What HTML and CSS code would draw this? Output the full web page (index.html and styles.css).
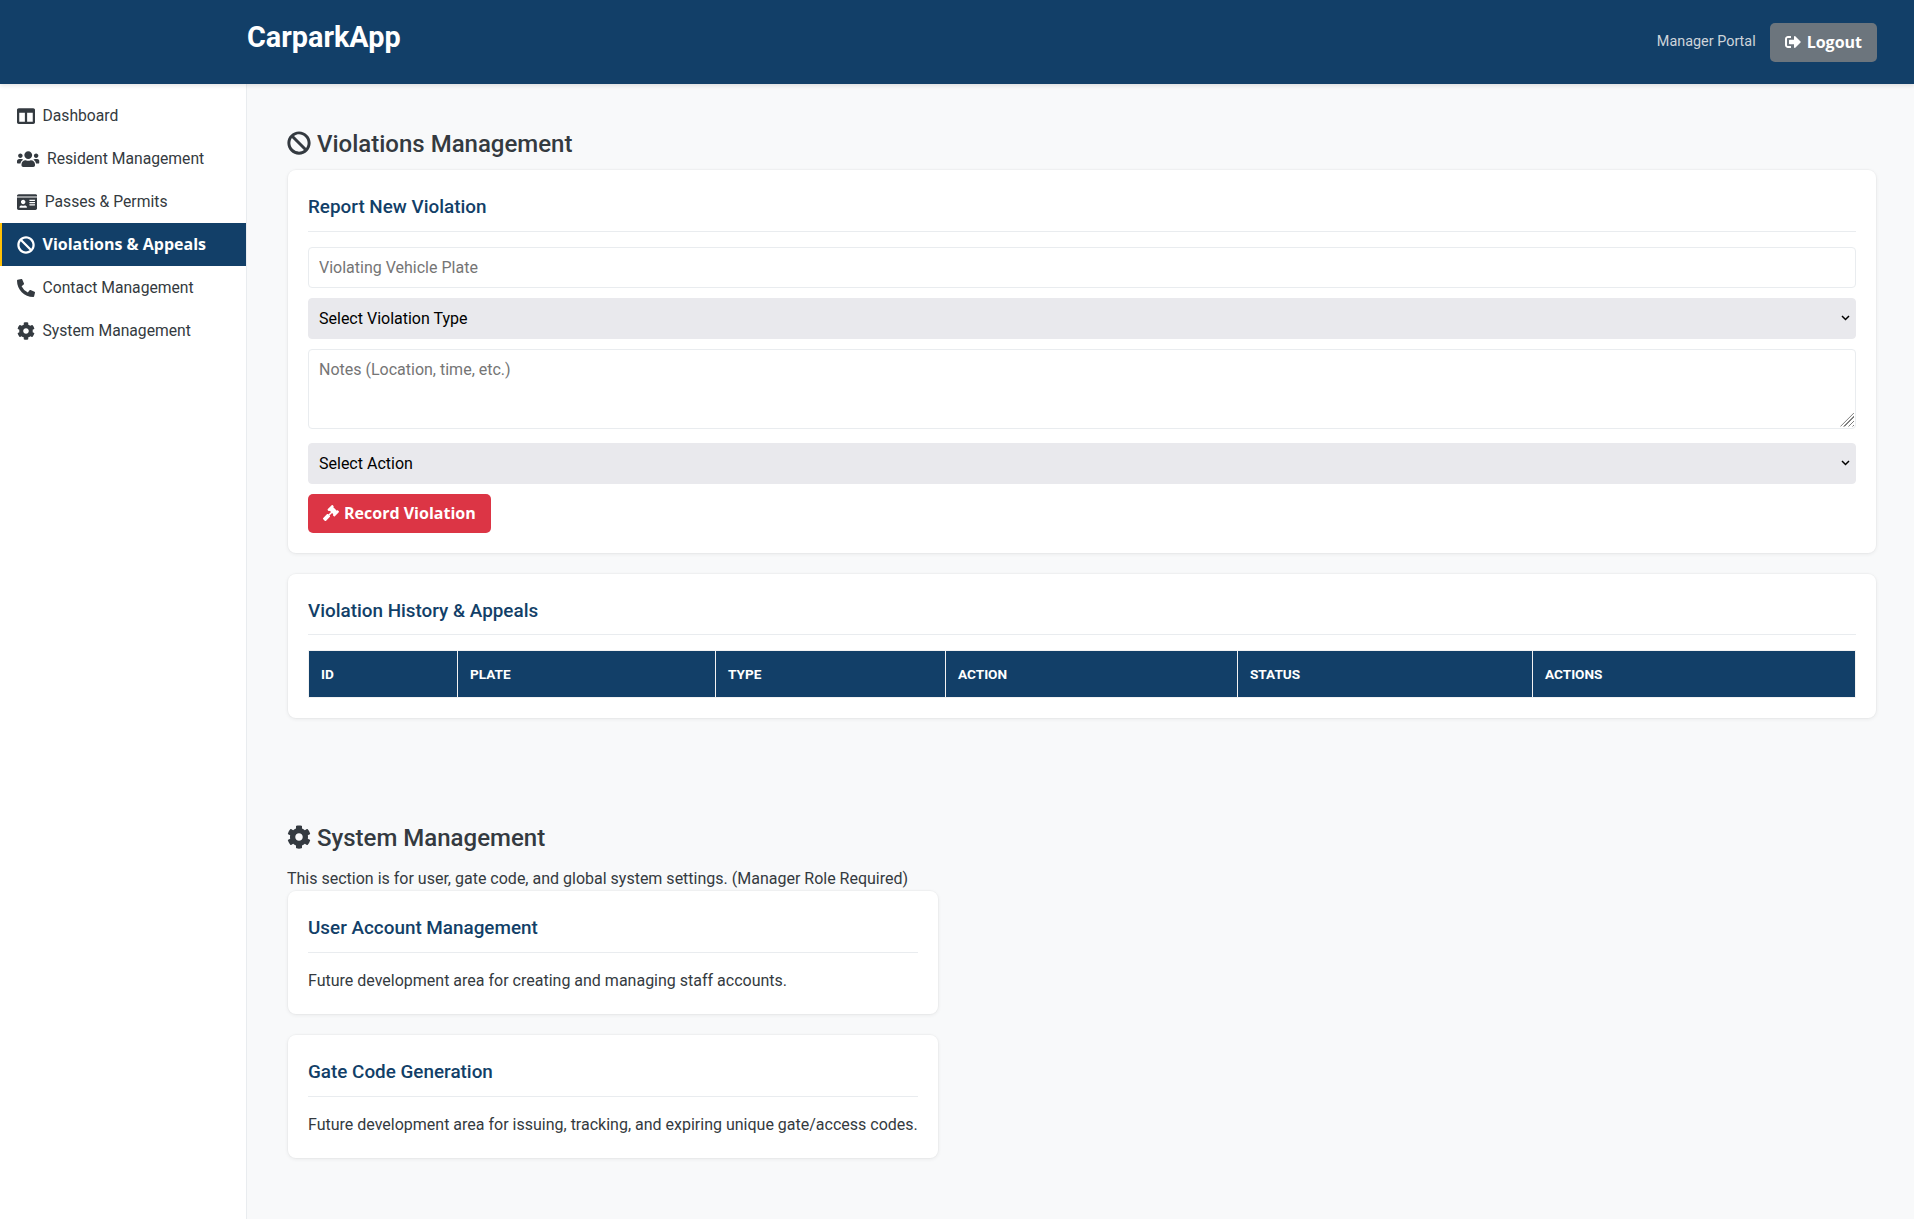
FILE: index.html
```html
<!DOCTYPE html>
<html lang="en">
<head>
  <meta charset="UTF-8">
  <title>CarparkApp - Manager Portal</title>
  <meta name="viewport" content="width=device-width, initial-scale=1.0">
  <link rel="stylesheet" href="styles.css">
</head>
<body>

  <svg class="icon-defs" aria-hidden="true">
    <symbol id="i-columns" viewBox="0 0 512 512"><path d="M464 32H48C21.49 32 0 53.49 0 80v352c0 26.51 21.49 48 48 48h416c26.51 0 48-21.49 48-48V80c0-26.51-21.49-48-48-48zM224 416H64V160h160v256zm224 0H288V160h160v256z"/></symbol>
    <symbol id="i-users" viewBox="0 0 640 512"><path d="M96 224c35.3 0 64-28.7 64-64s-28.7-64-64-64-64 28.7-64 64 28.7 64 64 64zm448 0c35.3 0 64-28.7 64-64s-28.7-64-64-64-64 28.7-64 64 28.7 64 64 64zm32 32h-64c-17.6 0-33.5 7.1-45.1 18.6 40.3 22.1 68.9 62 75.1 109.4h66c17.7 0 32-14.3 32-32v-32c0-35.3-28.7-64-64-64zm-256 0c61.9 0 112-50.1 112-112S381.9 32 320 32 208 82.1 208 144s50.1 112 112 112zm76.8 32h-8.3c-20.8 10-43.9 16-68.5 16s-47.6-6-68.5-16h-8.3C179.6 288 128 339.6 128 403.2V432c0 26.5 21.5 48 48 48h288c26.5 0 48-21.5 48-48v-28.8c0-63.6-51.6-115.2-115.2-115.2zm-223.7-13.4C161.5 263.1 145.6 256 128 256H64c-35.3 0-64 28.7-64 64v32c0 17.7 14.3 32 32 32h65.9c6.3-47.4 34.9-87.3 75.2-109.4z"/></symbol>
    <symbol id="i-idcard" viewBox="0 0 576 512"><path d="M528 32H48C21.5 32 0 53.5 0 80v16h576V80c0-26.5-21.5-48-48-48zM0 432c0 26.5 21.5 48 48 48h480c26.5 0 48-21.5 48-48V128H0v304zm352-232c0-4.4 3.6-8 8-8h144c4.4 0 8 3.6 8 8v16c0 4.4-3.6 8-8 8H360c-4.4 0-8-3.6-8-8v-16zm0 64c0-4.4 3.6-8 8-8h144c4.4 0 8 3.6 8 8v16c0 4.4-3.6 8-8 8H360c-4.4 0-8-3.6-8-8v-16zm0 64c0-4.4 3.6-8 8-8h144c4.4 0 8 3.6 8 8v16c0 4.4-3.6 8-8 8H360c-4.4 0-8-3.6-8-8v-16zM176 192c35.3 0 64 28.7 64 64s-28.7 64-64 64-64-28.7-64-64 28.7-64 64-64zM67.1 396.2C75.5 370.5 99.6 352 128 352h8.2c12.3 5.1 25.7 8 39.8 8s27.6-2.9 39.8-8h8.2c28.4 0 52.5 18.5 60.9 44.2 3.2 9.9-5.2 19.8-15.6 19.8H82.7c-10.4 0-18.8-10-15.6-19.8z"/></symbol>
    <symbol id="i-ban" viewBox="0 0 512 512"><path d="M256 8C119.034 8 8 119.033 8 256s111.034 248 248 248 248-111.034 248-248S392.967 8 256 8zm130.108 117.892c65.448 65.448 70 165.481 20.677 235.637L150.47 105.216c70.204-49.356 170.226-44.735 235.638 20.676zM125.892 386.108c-65.448-65.448-70-165.481-20.677-235.637L361.53 406.784c-70.203 49.356-170.226 44.736-235.638-20.676z"/></symbol>
    <symbol id="i-phone" viewBox="0 0 512 512"><path d="M497.39 361.8l-112-48a24 24 0 0 0-28 6.9l-49.6 60.6A370.66 370.66 0 0 1 130.6 204.11l60.6-49.6a23.94 23.94 0 0 0 6.9-28l-48-112A24.16 24.16 0 0 0 122.6.61l-104 24A24 24 0 0 0 0 48c0 256.5 207.9 464 464 464a24 24 0 0 0 23.4-18.6l24-104a24.29 24.29 0 0 0-14.01-27.6z"/></symbol>
    <symbol id="i-cog" viewBox="0 0 512 512"><path d="M487.4 315.7l-42.6-24.6c4.3-23.2 4.3-47 0-70.2l42.6-24.6c4.9-2.8 7.1-8.6 5.5-14-11.1-35.6-30-67.8-54.7-94.6-3.8-4.1-10-5.1-14.8-2.3L380.8 110c-17.9-15.4-38.5-27.3-60.8-35.1V25.8c0-5.6-3.9-10.5-9.4-11.7-36.7-8.2-74.3-7.8-109.2 0-5.5 1.2-9.4 6.1-9.4 11.7V75c-22.2 7.9-42.8 19.8-60.8 35.1L88.7 85.5c-4.9-2.8-11-1.9-14.8 2.3-24.7 26.7-43.6 58.9-54.7 94.6-1.7 5.4.6 11.2 5.5 14L67.3 221c-4.3 23.2-4.3 47 0 70.2l-42.6 24.6c-4.9 2.8-7.1 8.6-5.5 14 11.1 35.6 30 67.8 54.7 94.6 3.8 4.1 10 5.1 14.8 2.3l42.6-24.6c17.9 15.4 38.5 27.3 60.8 35.1v49.2c0 5.6 3.9 10.5 9.4 11.7 36.7 8.2 74.3 7.8 109.2 0 5.5-1.2 9.4-6.1 9.4-11.7v-49.2c22.2-7.9 42.8-19.8 60.8-35.1l42.6 24.6c4.9 2.8 11 1.9 14.8-2.3 24.7-26.7 43.6-58.9 54.7-94.6 1.5-5.5-.7-11.3-5.6-14.1zM256 336c-44.1 0-80-35.9-80-80s35.9-80 80-80 80 35.9 80 80-35.9 80-80 80z"/></symbol>
    <symbol id="i-logout" viewBox="0 0 512 512"><path d="M497 273L329 441c-15 15-41 4.5-41-17v-96H152c-13.3 0-24-10.7-24-24v-96c0-13.3 10.7-24 24-24h136V88c0-21.4 25.9-32 41-17l168 168c9.3 9.4 9.3 24.6 0 34zM192 436v-40c0-6.6-5.4-12-12-12H96c-17.7 0-32-14.3-32-32V160c0-17.7 14.3-32 32-32h84c6.6 0 12-5.4 12-12V76c0-6.6-5.4-12-12-12H96c-53 0-96 43-96 96v192c0 53 43 96 96 96h84c6.6 0 12-5.4 12-12z"/></symbol>
    <symbol id="i-gavel" viewBox="0 0 512 512"><path d="M504.971 199.362l-22.627-22.627c-9.373-9.373-24.569-9.373-33.941 0l-5.657 5.657L329.608 69.255l5.657-5.657c9.373-9.373 9.373-24.569 0-33.941L312.638 7.029c-9.373-9.373-24.569-9.373-33.941 0L154.246 131.48c-9.373 9.373-9.373 24.569 0 33.941l22.627 22.627c9.373 9.373 24.569 9.373 33.941 0l5.657-5.657 39.598 39.598-81.04 81.04-5.657-5.657c-12.497-12.497-32.758-12.497-45.255 0L9.373 412.118c-12.497 12.497-12.497 32.758 0 45.255l45.255 45.255c12.497 12.497 32.758 12.497 45.255 0l114.745-114.745c12.497-12.497 12.497-32.758 0-45.255l-5.657-5.657 81.04-81.04 39.598 39.598-5.657 5.657c-9.373 9.373-9.373 24.569 0 33.941l22.627 22.627c9.373 9.373 24.569 9.373 33.941 0l124.451-124.451c9.372-9.372 9.372-24.568 0-33.941z"/></symbol>
  </svg>

  <header class="topbar">
    <h1 class="brand">CarparkApp</h1>
    <div class="topbar-right">
      <span class="portal-label">Manager Portal</span>
      <button class="btn btn-grey"><svg class="icon"><use href="#i-logout"/></svg>Logout</button>
    </div>
  </header>

  <div class="layout">
    <!-- Sidebar -->
    <nav class="sidebar">
      <a class="nav-link" href="#"><svg class="icon"><use href="#i-columns"/></svg>Dashboard</a>
      <a class="nav-link" href="#"><svg class="icon icon-wide"><use href="#i-users"/></svg>Resident Management</a>
      <a class="nav-link" href="#"><svg class="icon icon-card"><use href="#i-idcard"/></svg>Passes &amp; Permits</a>
      <a class="nav-link active" href="#"><svg class="icon"><use href="#i-ban"/></svg>Violations &amp; Appeals</a>
      <a class="nav-link" href="#"><svg class="icon"><use href="#i-phone"/></svg>Contact Management</a>
      <a class="nav-link" href="#"><svg class="icon"><use href="#i-cog"/></svg>System Management</a>
    </nav>

    <main class="content">
      <!-- Violations -->
      <section class="section">
        <h2 class="page-title"><svg class="icon"><use href="#i-ban"/></svg> Violations Management</h2>

        <div class="card">
          <h3 class="card-title">Report New Violation</h3>
          <input class="field" type="text" placeholder="Violating Vehicle Plate">
          <select class="field field-select">
            <option>Select Violation Type</option>
          </select>
          <div class="notes-wrap">
            <textarea class="field field-notes" placeholder="Notes (Location, time, etc.)"></textarea>
            <span class="grip"></span>
          </div>
          <select class="field field-select">
            <option>Select Action</option>
          </select>
          <button class="btn btn-red"><svg class="icon"><use href="#i-gavel"/></svg>Record Violation</button>
        </div>

        <div class="card">
          <h3 class="card-title">Violation History &amp; Appeals</h3>
          <table class="data-table">
            <thead>
              <tr>
                <th class="col-id">ID</th>
                <th class="col-plate">Plate</th>
                <th class="col-type">Type</th>
                <th class="col-action">Action</th>
                <th class="col-status">Status</th>
                <th>Actions</th>
              </tr>
            </thead>
            <tbody></tbody>
          </table>
        </div>
      </section>

      <!-- System -->
      <section class="section section-system">
        <h2 class="page-title"><svg class="icon"><use href="#i-cog"/></svg> System Management</h2>
        <p class="section-note">This section is for user, gate code, and global system settings. (Manager Role Required)</p>

        <div class="card card-narrow">
          <h3 class="card-title">User Account Management</h3>
          <p>Future development area for creating and managing staff accounts.</p>
        </div>

        <div class="card card-narrow">
          <h3 class="card-title">Gate Code Generation</h3>
          <p>Future development area for issuing, tracking, and expiring unique gate/access codes.</p>
        </div>
      </section>
    </main>
  </div>
</body>
</html>
```

FILE: styles.css
```css
* {
  box-sizing: border-box;
}

body {
  font-family: Roboto, sans-serif;
  font-size: 16px;
  line-height: 1.6;
  background: #f8f9fa;
  color: #343a40;
  margin: 0;
  padding: 0;
}

.icon-defs {
  display: none;
}

.icon {
  width: 1em;
  height: 1em;
  fill: currentColor;
  vertical-align: -0.125em;
}

/* Top bar */
.topbar {
  background: #123f68;
  color: #fff;
  height: 84px;
  padding: 0 37px 0 247px;
  display: flex;
  justify-content: space-between;
  align-items: center;
  box-shadow: 0 2px 4px rgba(0, 0, 0, 0.1);
  position: relative;
}

.brand {
  font-size: 28.8px;
  font-weight: 700;
  margin: 0 0 10px;
}

.topbar-right {
  display: flex;
  align-items: center;
  gap: 14px;
}

.portal-label {
  font-size: 14.4px;
  color: #ced4da;
}

.btn {
  font-family: "Open Sans", sans-serif;
  font-size: 16px;
  font-weight: 700;
  line-height: 19px;
  color: #fff;
  border: none;
  border-radius: 5px;
  padding: 10px 15px;
  cursor: pointer;
}

.btn .icon {
  margin-right: 5px;
}

.btn-grey {
  background: #6c757d;
}

.btn-grey .icon {
  margin-right: 6px;
}

.btn-red {
  background: #dc3545;
}

/* Layout */
.layout {
  display: flex;
  min-height: 1135px;
}

.sidebar {
  width: 247px;
  flex-shrink: 0;
  background: #fff;
  border-right: 1px solid #e9ecef;
  padding-top: 10px;
}

.nav-link {
  display: flex;
  align-items: center;
  height: 43px;
  padding-left: 17px;
  font-size: 15.7px;
  color: #343a40;
  text-decoration: none;
}

.nav-link .icon {
  font-size: 18px;
  margin-right: 7.5px;
  flex-shrink: 0;
}

.nav-link .icon-wide {
  width: 22.5px;
}

.nav-link .icon-card {
  width: 20.25px;
}

.nav-link.active {
  background: #123f68;
  color: #fff;
  font-family: "Open Sans", sans-serif;
  font-size: 16px;
  font-weight: 700;
  border-left: 2px solid #ffc107;
  padding-left: 15px;
}

.content {
  flex: 1;
  min-width: 0;
  padding: 41px 38px 40px 41px;
}

.section-system {
  margin-top: 101.5px;
}

.page-title {
  font-size: 24px;
  font-weight: 500;
  margin: 0 0 7px -1px;
}

.section-system .page-title {
  margin-bottom: 8px;
}

.section-note {
  margin: 0 0 0 -1px;
}

.card {
  background: #fff;
  border-radius: 8px;
  padding: 20px;
  margin-bottom: 21px;
  box-shadow: 0 0 0 1px rgba(0, 0, 0, 0.02), 0 1px 4px rgba(0, 0, 0, 0.07);
}

.card:last-child {
  margin-bottom: 0;
}

.card-narrow {
  width: 650px;
}

.card p {
  margin: 0;
}

.card-title {
  font-size: 18.88px;
  font-weight: 500;
  color: #123f68;
  margin: 0 0 15px;
  padding-top: 2px;
  padding-bottom: 8px;
  border-bottom: 1px solid #e9ecef;
}

.card-narrow .card-title {
  padding-bottom: 9px;
}

/* Form */
.field {
  display: block;
  width: 100%;
  height: 41px;
  padding: 10px;
  margin-bottom: 10px;
  font-family: Roboto, sans-serif;
  font-size: 16px;
  border: 1px solid #e9ecef;
  border-radius: 4px;
  background: #fff;
}

.field-select {
  appearance: none;
  background: #e9e9ed url("data:image/svg+xml,%3Csvg xmlns='http://www.w3.org/2000/svg' width='9' height='6'%3E%3Cpath d='M1 1l3.5 3.5L8 1' fill='none' stroke='%23000' stroke-width='1.5'/%3E%3C/svg%3E") no-repeat right 5px center;
  border-color: #e9e9ed;
  color: #000;
}

.notes-wrap {
  position: relative;
  margin-bottom: 14px;
}

.field-notes {
  height: 80px;
  margin-bottom: 0;
  resize: none;
}

/* textarea drag corner */
.grip {
  position: absolute;
  right: 2px;
  bottom: 2px;
  width: 14px;
  height: 14px;
  background: repeating-linear-gradient(135deg, #808080 0, #808080 1px, transparent 1px, transparent 3px);
  clip-path: polygon(100% 0, 100% 100%, 0 100%);
  pointer-events: none;
}

/* Table */
.data-table {
  width: 100%;
  table-layout: fixed;
  border-collapse: collapse;
}

.data-table th {
  background: #123f68;
  color: #fff;
  font-size: 13.6px;
  font-weight: 700;
  line-height: 22px;
  text-align: left;
  text-transform: uppercase;
  padding: 12px;
  border: 1px solid #f2f2f2;
}

.col-id { width: 149px; }
.col-plate { width: 258px; }
.col-type { width: 230px; }
.col-action { width: 292px; }
.col-status { width: 295px; }
```
